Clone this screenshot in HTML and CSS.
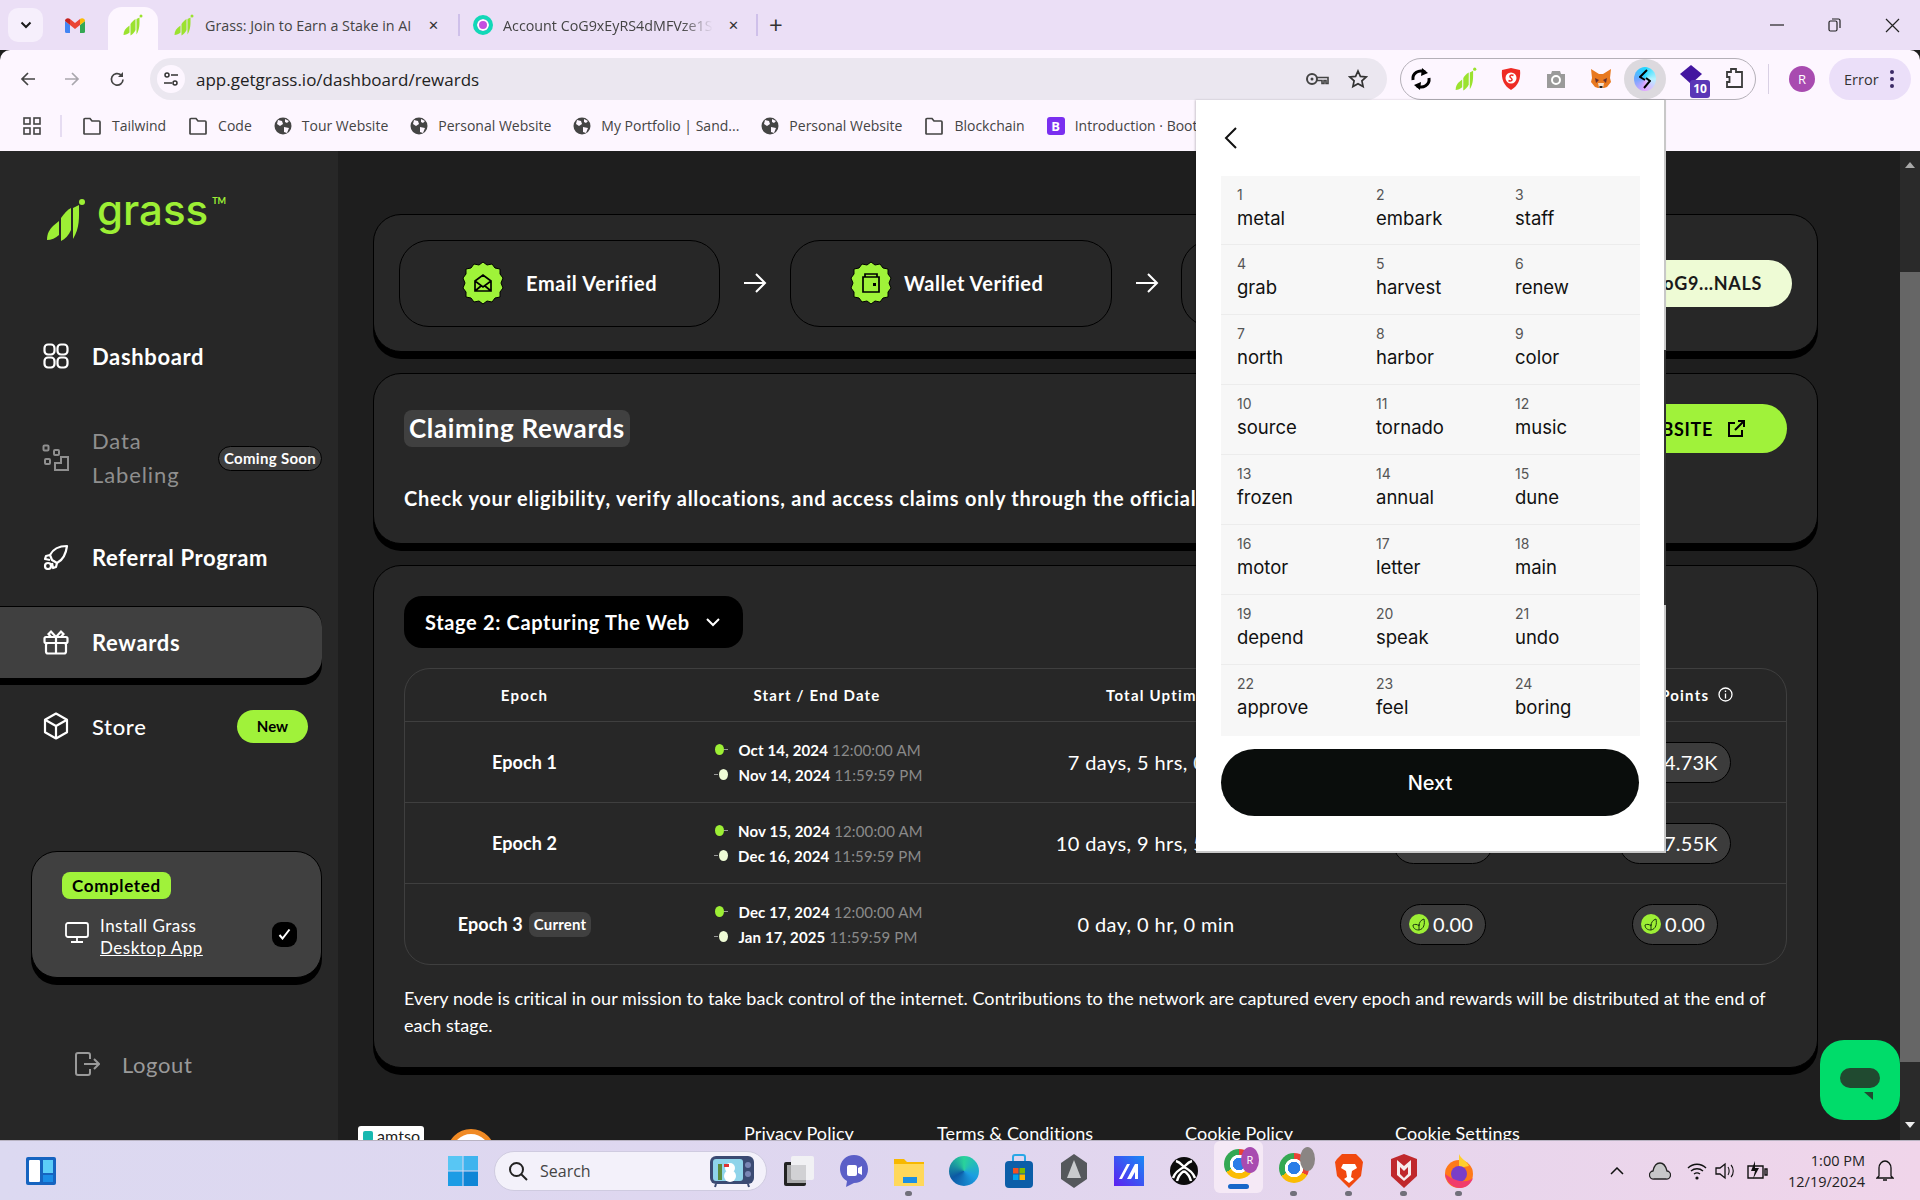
FILE: index.html
```html
<!DOCTYPE html>
<html lang="en">
<head>
<meta charset="utf-8">
<title>Grass rewards</title>
<link rel="stylesheet" href="styles.css">
</head>
<body>
<svg class="defs" width="0" height="0" aria-hidden="true">
  <symbol id="grass" viewBox="0 0 40 44">
    <path d="M1 42c0-7 3-11 6-14l6-5v14c-3 3-8 5-12 5z" fill="currentColor"/>
    <path d="M15 20c3-4 6-8 10-10v22c-2 5-6 9-10 11z" fill="currentColor"/>
    <path d="M27 10l6-3c0 12 1 23-6 34z" fill="currentColor"/>
    <circle cx="36" cy="4" r="3" fill="currentColor"/>
  </symbol>
  <symbol id="folder" viewBox="0 0 20 18"><path d="M2 16.500V2.500a1 1 0 0 1 1-1h5l2 2.500h7a1 1 0 0 1 1 1v11.500a.5.500 0 0 1-.5.500H3a1 1 0 0 1-1-.5z" fill="none" stroke="#444" stroke-width="1.700"/></symbol>
  <symbol id="globe" viewBox="0 0 18 18"><circle cx="9" cy="9" r="8.500" fill="#444"/><path d="M4 3l4 1 1 3-3 2-3-2zM10 10l5 1-2 5-3-1zM11 2l4 2-2 2-2-1z" fill="#fdf6ff"/></symbol>
  <symbol id="leaf" viewBox="0 0 20 20"><circle cx="10" cy="10" r="10" fill="#9def35"/><path d="M10 16c-4 0-6-2-6-5 2-1 4-1 6 1 0-4 2-6 5-7 1 5 0 10-5 11zm0 0v-6" fill="none" stroke="#1d3a10" stroke-width="1"/></symbol>
  <symbol id="badge" viewBox="0 0 42 44"><path d="M21 1l4 3 5-1 3 4 5 1 0 5 3 4-2 5 2 5-3 4 0 5-5 1-3 4-5-1-4 3-4-3-5 1-3-4-5-1 0-5-3-4 2-5-2-5 3-4 0-5 5-1 3-4 5 1z" fill="#9ff339" stroke="#000" stroke-width="1"/></symbol>
</svg>

<header class="tabstrip">
  <div class="tab-menu"><svg width="12" height="8" viewBox="0 0 12 8"><path d="M1.500 1.500L6 6l4.500-4.500" fill="none" stroke="#1a1a1a" stroke-width="2"/></svg></div>
  <svg class="gmail" width="20" height="15" viewBox="0 0 20 15"><path d="M0 3v10.500A1.500 1.500 0 0 0 1.500 15H5V7z" fill="#4285f4"/><path d="M15 15h3.500a1.500 1.500 0 0 0 1.500-1.500V3l-5 4z" fill="#34a853"/><path d="M5 7V1L10 5l5-4v6l-5 4z" fill="#ea4335"/><path d="M0 3c0-2.500 3-3.500 5-2v6z" fill="#c5221f"/><path d="M15 1c2-1.500 5-.5 5 2l-5 4z" fill="#fbbc04"/></svg>
  <div class="tab-active"><svg class="grass-ico" width="20" height="24"><use href="#grass"/></svg></div>
  <div class="tab tab-first">
    <svg class="grass-ico" width="20" height="24"><use href="#grass"/></svg>
    <span class="tab-title">Grass: Join to Earn a Stake in AI</span>
    <span class="tab-x">✕</span>
  </div>
  <i class="tab-sep"></i>
  <div class="tab tab-second">
    <span class="solflare"></span>
    <span class="tab-title tab-fade">Account CoG9xEyRS4dMFVze1S</span>
    <span class="tab-x">✕</span>
  </div>
  <i class="tab-sep tab-sep-2"></i>
  <span class="tab-plus">+</span>
  <div class="win-controls">
    <svg width="14" height="2" viewBox="0 0 14 2"><path d="M0 1h14" stroke="#222" stroke-width="1.200"/></svg>
    <svg width="13" height="14" viewBox="0 0 13 14"><rect x="1" y="3" width="8" height="10" rx="1.500" fill="none" stroke="#222" stroke-width="1.200"/><path d="M4 1h6.500A1.500 1.500 0 0 1 12 2.500V10" fill="none" stroke="#222" stroke-width="1.200"/></svg>
    <svg width="15" height="15" viewBox="0 0 15 15"><path d="M1 1l13 13M14 1L1 14" stroke="#222" stroke-width="1.200"/></svg>
  </div>
</header>

<nav class="toolbar">
  <svg class="tool-back" width="16" height="16" viewBox="0 0 16 16"><path d="M15 8H2M8 2L2 8l6 6" fill="none" stroke="#444" stroke-width="1.700"/></svg>
  <svg class="tool-fwd" width="16" height="16" viewBox="0 0 16 16"><path d="M1 8h13M8 2l6 6-6 6" fill="none" stroke="#a9a6ad" stroke-width="1.700"/></svg>
  <svg class="tool-reload" width="17" height="17" viewBox="0 0 17 17"><path d="M14 8.500A5.800 5.800 0 1 1 12 4" fill="none" stroke="#444" stroke-width="1.700"/><path d="M14 1v5H9z" fill="#444"/></svg>
  <div class="omnibox">
    <span class="site-info"><svg width="16" height="16" viewBox="0 0 16 16"><g fill="none" stroke="#333" stroke-width="1.500"><circle cx="4" cy="4" r="2"/><circle cx="12" cy="12" r="2"/><path d="M8 4h7M1 12h8"/></g></svg></span>
    <span class="url">app.getgrass.io/dashboard/rewards</span>
    <svg class="omni-key" width="24" height="14" viewBox="0 0 24 14"><circle cx="7" cy="7" r="5" fill="none" stroke="#444" stroke-width="2"/><circle cx="7" cy="7" r="1.500" fill="#444"/><path d="M12 5.500h11v6h-2V8.500h-2v3h-2V8.500h-5" fill="none" stroke="#444" stroke-width="1.600"/></svg>
    <svg class="omni-star" width="20" height="20" viewBox="0 0 20 20"><path d="M10 2l2.400 5.400 5.800.6-4.300 3.900 1.200 5.700L10 14.700 4.900 17.600l1.200-5.700L1.800 8l5.800-.6z" fill="none" stroke="#333" stroke-width="1.700"/></svg>
  </div>
  <div class="ext-group">
    <span class="ext ext-sync"><svg width="22" height="24" viewBox="0 0 22 24"><path d="M3 13C2 6 9 2 15 5M19 11c1 7-6 11-12 8" fill="none" stroke="#000" stroke-width="3"/><path d="M12 1l6 5-7 3zM10 23l-6-5 7-3z" fill="#000"/></svg></span>
    <span class="ext"><svg class="grass-ico" width="22" height="24"><use href="#grass"/></svg></span>
    <span class="ext"><svg width="20" height="24" viewBox="0 0 20 24"><path d="M1 3l9-2 9 2c1 9-2 16-9 20C3 19 0 12 1 3z" fill="#ee2b24"/><circle cx="10" cy="11" r="5.500" fill="#fff"/><path d="M12.500 8.500C10 7 7.500 9 10 11s0 4-2.500 2.500" fill="none" stroke="#ee2b24" stroke-width="1.500"/></svg></span>
    <span class="ext"><svg width="20" height="20" viewBox="0 0 20 20"><path d="M1 5h4l1-3h8l1 3h4v14H1z" fill="#9a9a9a"/><circle cx="10" cy="11" r="4" fill="none" stroke="#fff" stroke-width="2"/></svg></span>
    <span class="ext"><svg width="22" height="22" viewBox="0 0 22 22"><path d="M1 1l8 5h4l8-5-1 9 1 4-4 5-3 1H8l-3-1-4-5 1-4z" fill="#e8791f"/><path d="M5 10l4 2-3 3zM17 10l-4 2 3 3z" fill="#633"/><path d="M8 15h6l-1 5H9z" fill="#f2dcc8"/><path d="M9.500 18h3v2h-3z" fill="#222"/></svg></span>
    <span class="ext ext-on"><span class="sol-ico"><svg width="12" height="20" viewBox="0 0 12 20"><path d="M8 1L1 8l5 3M5 19l6-7-4-3" fill="none" stroke="#000" stroke-width="2"/></svg></span></span>
    <span class="ext ext-house"><svg width="24" height="22" viewBox="0 0 24 22"><path d="M1 10l11-9 11 9-11 10z" fill="#4316a0"/></svg><b class="ext-num">10</b></span>
    <span class="ext ext-puzzle"><svg width="20" height="24" viewBox="0 0 20 24"><path d="M2 5h4V2h5v3h6v15H2v-5h2.500v-5H2z" fill="none" stroke="#3b3b3b" stroke-width="1.800"/></svg></span>
  </div>
  <i class="tool-sep"></i>
  <span class="avatar">R</span>
  <div class="error-pill">Error<span class="kebab"><i></i><i></i><i></i></span></div>
</nav>

<div class="bookmarks">
  <svg class="bm-apps" width="18" height="18" viewBox="0 0 18 18"><g fill="none" stroke="#444" stroke-width="1.600"><rect x="1" y="1" width="6" height="6"/><rect x="11" y="1" width="6" height="6"/><rect x="1" y="11" width="6" height="6"/><rect x="11" y="11" width="6" height="6"/></g></svg>
  <i class="bm-sep"></i>
  <span class="bm"><svg width="20" height="18"><use href="#folder"/></svg>Tailwind</span>
  <span class="bm"><svg width="20" height="18"><use href="#folder"/></svg>Code</span>
  <span class="bm"><svg width="18" height="18"><use href="#globe"/></svg>Tour Website</span>
  <span class="bm"><svg width="18" height="18"><use href="#globe"/></svg>Personal Website</span>
  <span class="bm"><svg width="18" height="18"><use href="#globe"/></svg>My Portfolio | Sand...</span>
  <span class="bm"><svg width="18" height="18"><use href="#globe"/></svg>Personal Website</span>
  <span class="bm"><svg width="20" height="18"><use href="#folder"/></svg>Blockchain</span>
  <span class="bm"><b class="bs">B</b>Introduction · Bootstrap</span>
</div>

<div class="app">
  <aside class="sidebar">
    <div class="logo">
      <svg class="logo-mark" width="40" height="44"><use href="#grass"/></svg>
      <span class="logo-word">grass</span><sup class="logo-tm">TM</sup>
    </div>
    <ul class="nav">
      <li class="nav-item"><svg width="26" height="26" viewBox="0 0 26 26"><g fill="none" stroke="currentColor" stroke-width="2.200"><rect x="1.500" y="1.500" width="10" height="10" rx="3.500"/><rect x="14.500" y="1.500" width="10" height="10" rx="3.500"/><rect x="1.500" y="14.500" width="10" height="10" rx="3.500"/><rect x="14.500" y="14.500" width="10" height="10" rx="3.500"/></g></svg>Dashboard</li>
      <li class="nav-item nav-muted"><svg width="28" height="28" viewBox="0 0 28 28"><g fill="none" stroke="currentColor" stroke-width="2"><rect x="1.500" y="1.500" width="5" height="5" rx="1"/><rect x="12" y="6" width="5" height="5" rx="1"/><rect x="3" y="15" width="5" height="5" rx="1"/><path d="M13 26v-7h6v-6h7v13z"/></g></svg><span class="nav-two">Data<br>Labeling</span><span class="soon">Coming Soon</span></li>
      <li class="nav-item nav-ref"><svg width="26" height="26" viewBox="0 0 26 26"><g fill="none" stroke="currentColor" stroke-width="2.200" stroke-linejoin="round"><path d="M9 16L7 11c3-6 9-9 17-9-1 8-4 14-10 17z"/><path d="M7 11L3 12l-1 3 5 1M14 19l-1 4-3 1-1-5"/><circle cx="5" cy="22" r="3"/></g></svg>Referral Program</li>
      <li class="nav-item nav-active"><svg width="26" height="26" viewBox="0 0 26 26"><g fill="none" stroke="currentColor" stroke-width="2.200"><rect x="1.500" y="8" width="23" height="6" rx="1.500"/><rect x="3" y="14" width="20" height="10.500" rx="2"/><path d="M13 8v16.500M13 8L8 2.500 5.500 5 8 8M13 8l5-5.500L20.500 5 18 8"/></g></svg>Rewards</li>
      <li class="nav-item nav-store"><svg width="28" height="28" viewBox="0 0 28 28"><g fill="none" stroke="currentColor" stroke-width="2.200" stroke-linejoin="round"><path d="M14 1.500l11 6.200v12.600l-11 6.200L3 20.300V7.700z"/><path d="M3 7.700l11 6.300 11-6.300M14 14v12.500"/></g></svg>Store<span class="new-pill">New</span></li>
    </ul>
    <div class="install">
      <span class="done-chip">Completed</span>
      <div class="install-row">
        <svg width="24" height="21" viewBox="0 0 24 21"><g fill="none" stroke="currentColor" stroke-width="1.800"><rect x="1" y="1" width="22" height="14" rx="2"/><path d="M12 15v5M6 20h12"/></g></svg>
        <div class="install-text">Install Grass<br><u>Desktop App</u></div>
        <span class="check"><svg width="13" height="12" viewBox="0 0 13 12"><path d="M1.500 7l3 3.500L11.500 1.500" fill="none" stroke="#fff" stroke-width="2"/></svg></span>
      </div>
    </div>
    <div class="logout"><svg width="26" height="26" viewBox="0 0 26 26"><g fill="none" stroke="currentColor" stroke-width="2"><path d="M16 8V4a2 2 0 0 0-2-2H4a2 2 0 0 0-2 2v18a2 2 0 0 0 2 2h10a2 2 0 0 0 2-2v-4M10 13h15M20 8l5 5-5 5"/></g></svg>Logout</div>
  </aside>

  <main class="main">
    <section class="card card-steps">
      <div class="step"><span class="step-badge"><svg width="42" height="44"><use href="#badge"/></svg><svg class="step-glyph" width="20" height="20" viewBox="0 0 20 20"><path d="M2 8l8-6 8 6v10H2zM2 8l8 6 8-6M2 18l6-5M18 18l-6-5" fill="none" stroke="#000" stroke-width="1.700"/></svg></span>Email Verified</div>
      <svg class="step-arrow" width="24" height="20" viewBox="0 0 24 20"><path d="M1 10h21M13 1l9 9-9 9" fill="none" stroke="#fff" stroke-width="2"/></svg>
      <div class="step step-wallet"><span class="step-badge"><svg width="42" height="44"><use href="#badge"/></svg><svg class="step-glyph" width="18" height="20" viewBox="0 0 18 20"><path d="M1 4h16v15H1zM3 1h12v3H3z" fill="none" stroke="#000" stroke-width="1.700"/><rect x="11" y="10" width="3" height="3" fill="#000"/></svg></span>Wallet Verified</div>
      <svg class="step-arrow step-arrow-2" width="24" height="20" viewBox="0 0 24 20"><path d="M1 10h21M13 1l9 9-9 9" fill="none" stroke="#fff" stroke-width="2"/></svg>
      <div class="step step-third"></div>
      <span class="address">CoG9...NALS</span>
    </section>

    <section class="card card-claim">
      <div class="claim-head">
        <h2 class="claim-title">Claiming Rewards</h2>
        <span class="visit">VISIT WEBSITE<svg width="18" height="18" viewBox="0 0 18 18"><path d="M8 3H2v13h13v-6M11 1h6v6M17 1L8 10" fill="none" stroke="#000" stroke-width="2"/></svg></span>
      </div>
      <p class="claim-text">Check your eligibility, verify allocations, and access claims only through the official website.</p>
    </section>

    <section class="card card-epochs">
      <div class="stage">Stage 2: Capturing The Web<svg width="14" height="9" viewBox="0 0 14 9"><path d="M1 1l6 6 6-6" fill="none" stroke="#fff" stroke-width="2"/></svg></div>
      <div class="table">
        <div class="row row-head">
          <span>Epoch</span><span>Start / End Date</span><span>Total Uptime</span><span>Uptime Points</span><span>Total Points<svg class="info" width="15" height="15" viewBox="0 0 15 15"><circle cx="7.500" cy="7.500" r="6.500" fill="none" stroke="#fff" stroke-width="1.300"/><path d="M7.500 6.500v5M7.500 3.500v1.500" stroke="#fff" stroke-width="1.300"/></svg></span>
        </div>
        <div class="row">
          <span class="ep">Epoch 1</span>
          <div class="dates"><div class="date-line"><i class="dot"></i><b>Oct 14, 2024</b> <em>12:00:00 AM</em></div><div class="date-line date-end"><i class="dot dot-end"></i><b>Nov 14, 2024</b> <em>11:59:59 PM</em></div></div>
          <span class="uptime">7 days, 5 hrs, 0 min</span>
          <span class="pts"><svg width="20" height="20"><use href="#leaf"/></svg>4.73K</span>
          <span class="pts"><svg width="20" height="20"><use href="#leaf"/></svg>24.73K</span>
        </div>
        <div class="row">
          <span class="ep">Epoch 2</span>
          <div class="dates"><div class="date-line"><i class="dot"></i><b>Nov 15, 2024</b> <em>12:00:00 AM</em></div><div class="date-line date-end"><i class="dot dot-end"></i><b>Dec 16, 2024</b> <em>11:59:59 PM</em></div></div>
          <span class="uptime">10 days, 9 hrs, 55 min</span>
          <span class="pts"><svg width="20" height="20"><use href="#leaf"/></svg>7.55K</span>
          <span class="pts"><svg width="20" height="20"><use href="#leaf"/></svg>27.55K</span>
        </div>
        <div class="row">
          <span class="ep">Epoch 3<span class="current">Current</span></span>
          <div class="dates"><div class="date-line"><i class="dot"></i><b>Dec 17, 2024</b> <em>12:00:00 AM</em></div><div class="date-line date-end"><i class="dot dot-end"></i><b>Jan 17, 2025</b> <em>11:59:59 PM</em></div></div>
          <span class="uptime">0 day, 0 hr, 0 min</span>
          <span class="pts"><svg width="20" height="20"><use href="#leaf"/></svg>0.00</span>
          <span class="pts"><svg width="20" height="20"><use href="#leaf"/></svg>0.00</span>
        </div>
      </div>
      <p class="note">Every node is critical in our mission to take back control of the internet. Contributions to the network are captured every epoch and rewards will be distributed at the end of each stage.</p>
    </section>

    <footer class="site-foot">
      <div class="foot-logos"><span class="amtso">amtso</span><span class="seal"></span></div>
      <a>Privacy Policy</a><a>Terms &amp; Conditions</a><a>Cookie Policy</a><a>Cookie Settings</a>
    </footer>
  </main>

  <div class="scrollbar"><span class="sb-up"></span><span class="sb-thumb"></span><span class="sb-down"></span></div>
</div>

<footer class="taskbar">
  <svg class="tb-widgets" width="30" height="28" viewBox="0 0 30 28"><rect width="30" height="28" rx="2" fill="#1664c0"/><rect x="3" y="3" width="11" height="22" rx="1" fill="#fff"/><rect x="17" y="3" width="10" height="13" fill="#5ccdf8"/><rect x="17" y="18" width="10" height="7" fill="#1a8ce6"/></svg>
  <svg class="tb-win" width="30" height="30" viewBox="0 0 30 30"><rect width="14.500" height="14.500" fill="#58c6f4"/><rect x="15.500" width="14.500" height="14.500" fill="#3fb4ee"/><rect y="15.500" width="14.500" height="14.500" fill="#1c9ce5"/><rect x="15.500" y="15.500" width="14.500" height="14.500" fill="#0f86d6"/></svg>
  <div class="tb-search">
    <svg width="20" height="20" viewBox="0 0 20 20"><circle cx="8.500" cy="8.500" r="6.500" fill="none" stroke="#222" stroke-width="2"/><path d="M13 13l6 6" stroke="#222" stroke-width="2"/></svg>
    <span>Search</span>
    <svg class="tb-tv" width="44" height="34" viewBox="0 0 44 34"><rect y="2" width="44" height="28" rx="6" fill="#3b4a72"/><rect x="3" y="5" width="30" height="22" rx="3" fill="#8fd4ea"/><circle cx="20" cy="14" r="5" fill="#fff"/><circle cx="20" cy="22" r="6" fill="#fff"/><rect x="8" y="10" width="4" height="16" fill="#5b8c3e"/><rect x="14" y="10" width="5" height="3" fill="#d33"/><circle cx="38" cy="11" r="3" fill="#7a86b5"/><circle cx="38" cy="20" r="3" fill="#7a86b5"/><path d="M6 30l-1 3M38 30l1 3" stroke="#3b4a72" stroke-width="2"/></svg>
  </div>
  <div class="tb-apps">
    <span class="slot"><svg width="30" height="30" viewBox="0 0 30 30"><rect y="6" width="22" height="24" rx="2" fill="#222"/><rect x="7" width="23" height="24" rx="2" fill="#f1f1f4"/><rect x="3" y="9" width="19" height="18" fill="#c9c9cc" opacity=".8"/></svg></span>
    <span class="slot"><svg width="28" height="32" viewBox="0 0 28 32"><path d="M14 0c8 0 14 6 14 14s-6 14-14 14l-8 4 1-6C3 24 0 19 0 14 0 6 6 0 14 0z" fill="#5b5fc7"/><rect x="7" y="10" width="10" height="11" rx="2" fill="#fff"/><path d="M18 13l4-2v9l-4-2z" fill="#fff"/></svg></span>
    <span class="slot has-dot"><svg width="30" height="30" viewBox="0 0 30 30"><path d="M0 3h10l3 3h17v24H0z" fill="#f7b800"/><rect y="8" width="30" height="22" fill="#ffd85a"/><rect x="9" y="21" width="14" height="6" fill="#1d8fe1"/></svg></span>
    <span class="slot"><span class="edge"></span></span>
    <span class="slot"><svg width="28" height="34" viewBox="0 0 28 34"><path d="M8 8V3a2 2 0 0 1 2-2h8a2 2 0 0 1 2 2v5" fill="none" stroke="#2aa7e6" stroke-width="2"/><rect y="7" width="28" height="27" rx="4" fill="#0c5ea8"/><rect x="8" y="14" width="5.500" height="5.500" fill="#f25022"/><rect x="14.500" y="14" width="5.500" height="5.500" fill="#7fba00"/><rect x="8" y="20.500" width="5.500" height="5.500" fill="#00a4ef"/><rect x="14.500" y="20.500" width="5.500" height="5.500" fill="#ffb900"/></svg></span>
    <span class="slot"><svg width="28" height="34" viewBox="0 0 28 34"><path d="M14 0l13 9v16l-13 9L1 25V9z" fill="#55585c"/><path d="M14 6l7 18H7z" fill="#c9cbce"/></svg></span>
    <span class="slot"><svg width="30" height="30" viewBox="0 0 30 30"><defs><linearGradient id="ma" x1="0" x2="1" y1="1" y2="0"><stop offset="0" stop-color="#5e1ff0"/><stop offset="1" stop-color="#188bf5"/></linearGradient></defs><rect width="30" height="30" fill="url(#ma)"/><path d="M5 23l8-15h3l-8 15zM13 23l8-15h3v15h-3v-7l-4 7z" fill="#fff"/></svg></span>
    <span class="slot"><svg width="28" height="28" viewBox="0 0 28 28"><circle cx="14" cy="14" r="14" fill="#0b0b0b"/><path d="M6 4c4 1 6 4 8 6 2-2 4-5 8-6M3 21c2-6 7-9 11-11 4 2 9 5 11 11M14 14c-3 2-6 6-7 10M14 14c3 2 6 6 7 10" fill="none" stroke="#fff" stroke-width="2.500"/></svg></span>
    <span class="slot slot-active"><span class="chrome"></span><b class="chrome-tag chrome-r">R</b></span>
    <span class="slot has-dot"><span class="chrome"></span><b class="chrome-tag chrome-g"></b></span>
    <span class="slot has-dot"><svg width="28" height="34" viewBox="0 0 28 34"><path d="M7 0h14l5 5 2 3-2 14-12 12L2 22 0 8l2-3z" fill="#f1490f"/><path d="M8 10h12l2 4-5 3-1 6 3 2-5 4-5-4 3-2-1-6-5-3z" fill="#fff"/></svg></span>
    <span class="slot has-dot"><svg width="26" height="34" viewBox="0 0 26 34"><path d="M0 5l13-5 13 5v17l-13 12L0 22z" fill="#c0282c"/><path d="M6 6v15l7 6 7-6V6l-7 6z" fill="#f7ecee"/><path d="M9 13l4 4 4-4v7l-4 4-4-4z" fill="#c0282c"/></svg></span>
    <span class="slot has-dot"><svg width="28" height="34" viewBox="0 0 28 34"><circle cx="14" cy="20" r="14" fill="#ff7a18"/><path d="M14 0c2 5 8 7 10 12L14 14z" fill="#ffcf2e"/><circle cx="14" cy="20" r="8" fill="#7a3ec8"/><path d="M0 20c1 8 8 14 15 14 6 0 11-4 13-10-4 4-14 6-28-4z" fill="#f13c6b"/></svg></span>
  </div>
  <div class="tray">
    <svg class="tray-up" width="14" height="8" viewBox="0 0 14 8"><path d="M1 7l6-6 6 6" fill="none" stroke="#111" stroke-width="1.500"/></svg>
    <svg width="22" height="18" viewBox="0 0 22 18"><path d="M5 17a4 4 0 0 1-1-8c1-5 3-8 7-8s6 4 7 8a4 4 0 0 1-1 8z" fill="#c7c7c9" stroke="#222" stroke-width="1.300"/></svg>
    <svg class="t-wifi" width="20" height="20" viewBox="0 0 20 20"><path d="M1 7c5-5 13-5 18 0M4 10c3.500-3 8.500-3 12 0M7 13c2-1.500 4-1.500 6 0" fill="none" stroke="#111" stroke-width="1.400"/><circle cx="10" cy="17" r="1.600" fill="#111"/></svg>
    <svg class="t-vol" width="20" height="18" viewBox="0 0 20 18"><path d="M1 6h4l5-4v14l-5-4H1z" fill="none" stroke="#111" stroke-width="1.300"/><path d="M13 5c1.500 2 1.500 6 0 8M16 3c3 3 3 9 0 12" fill="none" stroke="#111" stroke-width="1.100"/></svg>
    <svg class="t-bat" width="22" height="20" viewBox="0 0 22 20"><path d="M2 5h15v12H2zM19 8h2v6h-2z" fill="none" stroke="#111" stroke-width="1.400"/><path d="M9 0L5 10h4l-2 8 6-11H9z" fill="#111"/></svg>
    <div class="clock"><span>1:00 PM</span><span>12/19/2024</span></div>
    <svg class="tray-bell" width="18" height="22" viewBox="0 0 18 22"><path d="M3 16V8c0-4 3-7 6-7s6 3 6 7v8l2 2H1zM7 20h4" fill="none" stroke="#111" stroke-width="1.300"/></svg>
  </div>
</footer>

<aside class="popup">
  <svg class="pop-back" width="14" height="22" viewBox="0 0 14 22"><path d="M12 1L2 11l10 10" fill="none" stroke="#111" stroke-width="2"/></svg>
  <div class="seed">
    <div class="w"><small>1</small>metal</div><div class="w"><small>2</small>embark</div><div class="w"><small>3</small>staff</div>
    <div class="w"><small>4</small>grab</div><div class="w"><small>5</small>harvest</div><div class="w"><small>6</small>renew</div>
    <div class="w"><small>7</small>north</div><div class="w"><small>8</small>harbor</div><div class="w"><small>9</small>color</div>
    <div class="w"><small>10</small>source</div><div class="w"><small>11</small>tornado</div><div class="w"><small>12</small>music</div>
    <div class="w"><small>13</small>frozen</div><div class="w"><small>14</small>annual</div><div class="w"><small>15</small>dune</div>
    <div class="w"><small>16</small>motor</div><div class="w"><small>17</small>letter</div><div class="w"><small>18</small>main</div>
    <div class="w"><small>19</small>depend</div><div class="w"><small>20</small>speak</div><div class="w"><small>21</small>undo</div>
    <div class="w"><small>22</small>approve</div><div class="w"><small>23</small>feel</div><div class="w"><small>24</small>boring</div>
  </div>
  <div class="next">Next</div>
</aside>

<div class="chat"><svg width="40" height="32" viewBox="0 0 40 32"><rect width="40" height="20" rx="10" fill="#204a30"/><path d="M24 24h9v8z" fill="#204a30"/></svg></div>
</body>
</html>
```
FILE: styles.css
```css
* { box-sizing: border-box; }
html, body { margin: 0; padding: 0; }
body {
  width: 1920px; height: 1200px; overflow: hidden; position: relative;
  display: flex; flex-direction: column;
  font-family: "Lato", "Liberation Sans", sans-serif; color: #fff; background: #1e1e1e;
}
.defs { position: absolute; }
ul { list-style: none; margin: 0; padding: 0; }
h2, p { margin: 0; }
.grass-ico { color: #9be22f; }

/* browser tabs */
.tabstrip {
  height: 50px; flex: none; background: #ebdff6; display: flex; align-items: center;
  font: 14.300px "Open Sans", sans-serif; color: #444;
}
.tab-menu { width: 35px; height: 34px; margin-left: 8px; background: #f6effc; border-radius: 10px; display: flex; align-items: center; justify-content: center; }
.gmail { margin-left: 22px; }
.tab-active { width: 50px; height: 43px; margin-left: 23px; align-self: flex-end; background: #fdf6ff; border-radius: 14px 14px 0 0; display: flex; align-items: center; justify-content: center; padding-bottom: 7px; }
.tab { display: flex; align-items: center; }
.tab-first { margin-left: 16px; }
.tab-second { margin-left: 13px; }
.tab-title { margin-left: 11px; width: 208px; white-space: nowrap; overflow: hidden; }
.tab-second .tab-title { margin-left: 10px; width: 210px; }
.tab-fade { mask-image: linear-gradient(90deg, #000 85%, transparent); }
.tab-x { margin-left: 15px; font-size: 13px; color: #333; width: 16px; }
.tab-sep { width: 2px; height: 22px; background: #cfc0ea; margin-left: 14px; }
.tab-sep-2 { margin-left: 12px; }
.solflare { width: 20px; height: 20px; border-radius: 50%; border: 4px solid #12d8b8; background: #c54fe0; box-shadow: inset 0 0 0 2px #fff; }
.tab-plus { margin-left: 11px; font-size: 24px; line-height: 1; color: #333; }
.win-controls { margin-left: auto; display: flex; align-items: center; gap: 44px; padding-right: 20px; }

/* toolbar */
.toolbar { height: 50px; flex: none; background: #fdf6ff; display: flex; align-items: center; padding-top: 8px; border-radius: 10px 10px 0 0; margin-top: 0; }
.tool-back { margin-left: 20px; }
.tool-fwd { margin-left: 28px; }
.tool-reload { margin-left: 29px; }
.omnibox { width: 1237px; height: 42px; margin-left: 24px; background: #ebe7f0; border-radius: 21px; display: flex; align-items: center; color: #1f1f1f; }
.site-info { width: 28px; height: 28px; margin-left: 7px; border-radius: 50%; background: #fdf6ff; display: flex; align-items: center; justify-content: center; }
.url { margin-left: 11px; font: 17px "Open Sans", sans-serif; color: #222; }
.omni-key { margin-left: auto; }
.omni-star { margin: 0 19px 0 19px; }
.ext-group { width: 356px; height: 42px; margin-left: 13px; border: 1px solid #b4b0b8; border-radius: 21px; display: flex; align-items: center; padding-left: 1px; }
.ext { width: 45px; height: 40px; display: flex; align-items: center; justify-content: center; position: relative; flex: none; }
.ext-sync { margin-left: -4px; }
.ext-on { width: 42px; margin: 0 1px; background: #dcd9de; border-radius: 20px; }
.sol-ico { width: 22px; height: 24px; border-radius: 50%; background: conic-gradient(#1fd8ff, #b7f3ff, #e4a6ff, #6fa6ff, #1fd8ff); display: flex; align-items: center; justify-content: center; }
.ext-house { margin-left: 4px; }
.ext-puzzle { margin-left: -4px; }
.ext-house svg { margin: -8px 6px 0 0; }
.ext-num { position: absolute; right: 6px; bottom: 1px; width: 20px; height: 18px; background: #5a37b6; border-radius: 3px; color: #fff; font: 700 12px/18px "Open Sans", sans-serif; text-align: center; }
.tool-sep { width: 1px; height: 30px; background: #d9d0e4; margin-left: 12px; }
.avatar { width: 26px; height: 26px; border-radius: 50%; background: #a84bb0; color: #fff; margin-left: 20px; font: 13px/26px "Open Sans", sans-serif; text-align: center; }
.error-pill { width: 82px; height: 42px; margin-left: 14px; background: #ebdff9; border-radius: 21px; color: #333; font: 14.500px "Open Sans", sans-serif; display: flex; align-items: center; padding-left: 15px; }
.kebab { display: flex; flex-direction: column; gap: 3px; margin-left: 11px; }
.kebab i { width: 4px; height: 4px; border-radius: 50%; background: #3b2a66; }

/* bookmarks */
.bookmarks { height: 51px; flex: none; background: #fdf6ff; display: flex; align-items: center; gap: 22px; font: 14px "Open Sans", sans-serif; color: #444; white-space: nowrap; overflow: hidden; }
.bm-apps { margin-left: 23px; }
.bm-sep { width: 2px; height: 22px; background: #e6dcf2; margin: 0 -2px 0 -3px; }
.bm { display: flex; align-items: center; gap: 10px; }
.bs { width: 18px; height: 18px; background: #7a2ff0; color: #fff; border-radius: 3px; font-size: 13px; line-height: 18px; text-align: center; }

/* app frame */
.app { flex: 1; min-height: 0; display: flex; overflow: hidden; background: #1e1e1e; }
.sidebar { width: 338px; flex: none; background: #272727; padding-top: 47px; letter-spacing: .65px; }
.logo { display: flex; align-items: flex-start; margin-left: 46px; color: #9def35; height: 128px; letter-spacing: 0; }
.logo-mark { flex: none; }
.logo-word { font-family: "Inter", sans-serif; font-size: 42px; font-weight: 500; line-height: 40px; margin: -8px 0 0 11px; color: #9def35; }
.logo-tm { font-size: 9px; font-weight: 700; line-height: 12px; margin: -3px 0 0 4px; }

.nav { margin-right: 16px; }
.nav-item { display: flex; align-items: center; height: 60px; padding-left: 43px; font-size: 22px; font-weight: 700; color: #fff; }
.nav-item > svg { flex: none; margin-right: 23px; width: 26px; }
.nav-muted > svg, .nav-store > svg { width: 28px; margin-left: -1px; margin-right: 22px; }
.nav-muted { height: 76px; margin-top: 34px; color: #8f8f8f; font-weight: 400; position: relative; letter-spacing: .9px; }
.nav-two { line-height: 34px; }
.soon { margin-left: auto; height: 25px; padding: 0 5px; background: #3e3e3e; border: 1px solid #000; border-radius: 13px; color: #fff; font-size: 15px; font-weight: 700; line-height: 22px; letter-spacing: .3px; white-space: nowrap; }
.nav-ref { margin-top: 31px; }
.nav-active { height: 72px; margin-top: 19px; background: #404040; border-radius: 0 20px 20px 0; box-shadow: 0 7px 0 #000, inset 0 1px 0 #000; }
.nav-store { margin-top: 18px; font-weight: 500; }
.new-pill { margin-left: auto; margin-right: 14px; width: 71px; height: 33px; background: #a0f23a; border-radius: 17px; color: #000; font-size: 15px; font-weight: 700; line-height: 33px; text-align: center; letter-spacing: 0; }

.install { width: 291px; height: 127px; margin: 95px 0 0 31px; background: #404040; border: 1px solid #000; border-radius: 26px; box-shadow: 0 7px 0 #000; padding: 20px 24px 0 30px; color: #fff; }
.done-chip { display: inline-block; height: 27px; padding: 0 10px; background: #a0f23a; border-radius: 8px; color: #000; font-size: 17px; font-weight: 700; line-height: 27px; }
.install-row { display: flex; align-items: center; margin-top: 16px; }
.install-row > svg { flex: none; margin: -9px 11px 0 3px; }
.install-text { font-size: 17px; line-height: 22px; letter-spacing: .5px; }
.check { margin: -6px 0 0 auto; width: 25px; height: 25px; background: #000; border-radius: 9px; display: flex; align-items: center; justify-content: center; }
.logout { display: flex; align-items: center; gap: 22px; height: 30px; margin: 71px 0 0 74px; color: #9a9a9a; font-size: 22px; letter-spacing: .6px; }

/* main column */
.main { flex: 1; min-width: 0; padding: 63px 82px 0 35px; display: flex; flex-direction: column; overflow: hidden; letter-spacing: .65px; }
.card { flex: none; background: #272727; border: 1px solid #000; border-radius: 28px; box-shadow: 0 7px 0 #000; }
.card-steps { height: 138px; display: flex; align-items: center; padding: 0 25px; position: relative; }
.step { width: 321px; height: 87px; border: 1px solid #000; border-radius: 30px; display: flex; align-items: center; padding-left: 62px; gap: 22px; font-size: 20px; font-weight: 700; flex: none; }
.step-wallet { padding-left: 59px; gap: 12px; width: 322px; letter-spacing: .5px; }
.step-third { width: 320px; }
.step-badge { position: relative; width: 42px; height: 44px; display: flex; align-items: center; justify-content: center; }
.step-badge > svg:first-child { position: absolute; inset: 0; }
.step-glyph { position: relative; }
.step-arrow { flex: none; margin: 0 23px; }
.step-arrow-2 { margin-right: 22px; }
.address { position: absolute; right: 25px; top: 45px; width: 200px; height: 47px; background: #eefbd5; border-radius: 24px; color: #1a1a1a; font-size: 18px; font-weight: 700; line-height: 47px; text-align: right; padding-right: 30px; }

.card-claim { height: 171px; margin-top: 21px; padding: 30px 30px 0; }
.claim-head { display: flex; align-items: center; justify-content: space-between; }
.claim-title { height: 37px; padding: 0 5px; background: #404040; border-radius: 8px; font-size: 26px; font-weight: 700; line-height: 37px; }
.visit { width: 250px; height: 49px; background: #a0f23a; border-radius: 25px; color: #000; font-size: 18px; font-weight: 700; display: flex; align-items: center; justify-content: flex-end; padding-right: 42px; gap: 14px; }
.claim-text { margin-top: 33px; font-size: 20px; font-weight: 700; white-space: nowrap; letter-spacing: .75px; }

.card-epochs { height: 503px; margin-top: 21px; padding: 30px 30px 0; }
.stage { width: 339px; height: 52px; background: #000; border-radius: 18px; display: flex; align-items: center; gap: 16px; padding-left: 21px; font-size: 20px; font-weight: 700; }
.table { margin-top: 20px; height: 297px; border: 1px solid #3f3f3f; border-radius: 26px; overflow: hidden; }
.row { display: grid; grid-template-columns: 239px 346px 332px 242px 222px; align-items: center; justify-items: center; height: 81px; border-top: 1px solid #3f3f3f; }
.row-head { height: 52px; border-top: 0; font-size: 15px; font-weight: 700; letter-spacing: 1.200px; }
.info { margin-left: 9px; vertical-align: -1px; }
.ep { font-size: 18px; font-weight: 700; display: flex; align-items: center; letter-spacing: .1px; }
.current { margin-left: 6px; padding: 0 5px; height: 25px; background: #404040; border-radius: 8px; font-size: 15px; line-height: 25px; letter-spacing: .2px; }
.dates { margin-left: 4px; }
.date-line { display: flex; align-items: center; height: 25px; font-size: 15px; gap: 4px; white-space: nowrap; letter-spacing: .15px; }
.date-line b { font-weight: 700; }
.date-line em { font-style: normal; color: #8a8a8a; }
.dot { width: 9px; height: 11px; border-radius: 50%; background: #9def35; margin-right: 10px; position: relative; }
.dot::after { content: ""; position: absolute; left: 9px; top: 5px; width: 4px; height: 1px; background: #999; }
.dot-end { background: #eefbd5; margin-left: 4px; margin-right: 6px; }
.dot-end::after { left: -5px; }
.uptime { font-size: 20px; white-space: nowrap; letter-spacing: .4px; }
.pts { height: 41px; padding: 0 12px 0 8px; background: #3c3c3c; border: 1px solid #000; border-radius: 21px; display: flex; align-items: center; gap: 4px; font-size: 20px; letter-spacing: .15px; }
.note { margin-top: 20px; font-size: 18px; line-height: 27px; letter-spacing: .06px; }

.site-foot { flex: none; margin-top: 54px; display: flex; align-items: flex-start; font-size: 18px; white-space: nowrap; letter-spacing: .1px; }
.site-foot a { text-decoration: underline; }
.foot-logos { display: flex; width: 386px; margin-top: 4px; gap: 23px; margin-left: -15px; flex: none; }
.amtso { width: 66px; height: 40px; background: #fff; border-radius: 3px; color: #222; font-size: 16px; line-height: 20px; padding: 0 0 0 19px; position: relative; }
.amtso::before { content: ""; position: absolute; left: 5px; top: 5px; width: 10px; height: 10px; background: #18b8b0; border-radius: 2px; }
.seal { width: 48px; height: 48px; margin-top: 3px; border-radius: 50%; background: #fff; border: 5px solid #f08a24; }
.site-foot a:nth-of-type(1) { width: 193px; }
.site-foot a:nth-of-type(2) { width: 248px; }
.site-foot a:nth-of-type(3) { width: 210px; }
.site-foot a { text-decoration-color: #fff; }

.scrollbar { width: 20px; flex: none; background: #2a2a2a; display: flex; flex-direction: column; align-items: stretch; position: relative; }
.sb-up, .sb-down { height: 0; width: 0; align-self: center; border: 5px solid transparent; }
.sb-up { border-bottom: 6px solid #aaa; margin-top: 6px; }
.sb-thumb { height: 790px; margin-top: 104px; background: #666; }
.sb-down { border-top: 6px solid #eee; margin-top: 60px; }

/* taskbar */
.taskbar { height: 60px; flex: none; display: flex; align-items: center; background: linear-gradient(90deg, #dcd9f1, #dfd6ef 50%, #f0d5ea); border-top: 1px solid #b8b3c2; color: #111; font-family: "Open Sans", sans-serif; }
.tb-widgets { margin-left: 26px; flex: none; }
.tb-win { margin-left: 392px; flex: none; }
.tb-search { width: 273px; flex: none; height: 40px; margin-left: 16px; background: #f3f1fa; border: 1px solid #cfcbe0; border-radius: 20px; display: flex; align-items: center; padding-left: 13px; gap: 12px; font-size: 16px; color: #444; }
.tb-tv { margin-left: auto; margin-right: 12px; }
.tb-apps { display: flex; margin-left: 4px; flex: none; }
.slot { width: 55px; height: 59px; display: flex; align-items: center; justify-content: center; position: relative; }
.has-dot::after, .slot-active::after { content: ""; position: absolute; bottom: 4px; left: 24px; width: 7px; height: 5px; border-radius: 3px; background: #71707a; }
.slot-active { background: #f5e9f6; border-radius: 6px; width: 49px; height: 52px; margin: 0 3px; }
.slot-active::after { left: 14px; width: 21px; background: #1667c9; }
.edge { width: 30px; height: 30px; border-radius: 50%; background: conic-gradient(#2ad39a, #1b9de2, #0c59a4, #2ad39a); }
.chrome { width: 30px; height: 30px; border-radius: 50%; background: radial-gradient(circle, #2a7de8 0 6px, #fff 6.500px 9px, transparent 9.500px), conic-gradient(#e94235 0 33%, #fbbc04 33% 66%, #34a853 66%); margin-top: -6px; }
.chrome-tag { position: absolute; top: 6px; right: 4px; width: 18px; height: 26px; border-radius: 50%; background: #a84bb0; color: #fff; font-size: 11px; line-height: 26px; font-weight: 400; text-align: center; }
.chrome-g { background: #8a8583; top: 6px; right: 6px; height: 24px; width: 15px; }
.tray { display: flex; align-items: center; margin-left: 124px; flex: none; }
.tray-up { margin-right: 25px; }
.t-wifi { margin-left: 16px; }
.t-vol { margin-left: 8px; }
.t-bat { margin-left: 11px; }
.clock { display: flex; flex-direction: column; align-items: flex-end; width: 97px; font-size: 14.500px; line-height: 21px; color: #222; }
.tray-bell { margin-left: 11px; }

/* wallet popup */
.popup { position: absolute; left: 1196px; top: 100px; width: 470px; height: 753px; background: #fff; border-right: 2px solid #c8c8c8; border-bottom: 2px solid #c8c8c8; box-shadow: -1px 0 2px rgba(0,0,0,.2); padding: 27px 25px 0; color: #111; font-family: "Inter", sans-serif; }
.popup::after { content: ""; position: absolute; right: -2px; top: 250px; width: 2px; height: 255px; background: #333; }
.pop-back { display: block; margin: 0 0 0 3px; }
.seed { margin-top: 27px; width: 419px; display: grid; grid-template-columns: 139px 139px 141px; grid-template-rows: 69px repeat(6, 70px) 71px; background: #f7f7f7; }
.w { padding: 9px 0 0 16px; border-bottom: 1px solid #ececec; font-size: 18.500px; line-height: 28px; }
.w:nth-last-child(-n+3) { border-bottom: 0; }
.w small { display: block; font-size: 14px; line-height: 19px; color: #555; }
.next { width: 418px; height: 67px; margin-top: 13px; background: #0a0d0c; border-radius: 34px; color: #fff; font-size: 20px; font-weight: 500; line-height: 69px; text-align: center; }
.chat { position: absolute; left: 1820px; top: 1040px; width: 80px; height: 80px; border-radius: 24px; background: #00dc6a; display: flex; align-items: flex-start; justify-content: center; padding-top: 28px; }
```
